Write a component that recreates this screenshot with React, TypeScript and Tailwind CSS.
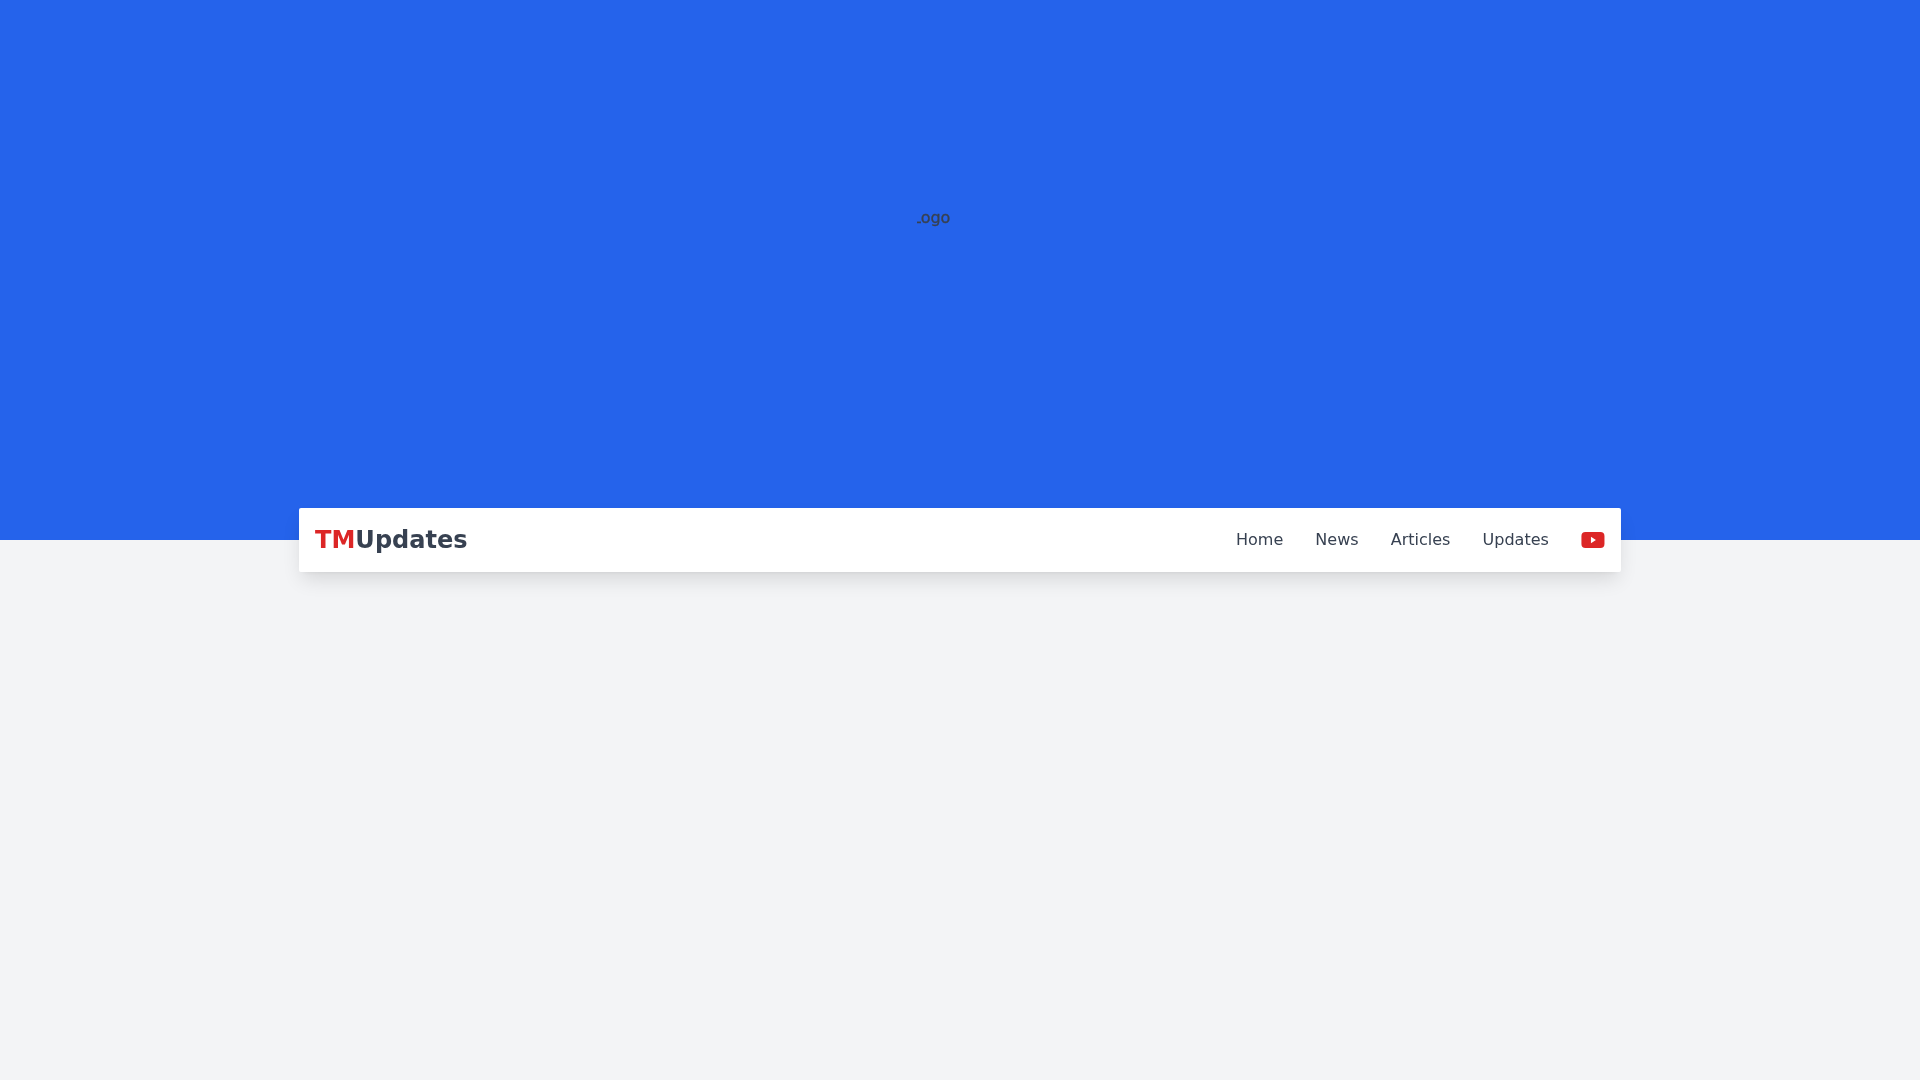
export default function App() {
  return (
    <div className="min-h-screen bg-[#f3f4f6] font-['DejaVu_Sans',sans-serif]">
      <div className="h-[540px] bg-[#2563eb] flex justify-center pt-[208px] pr-[50px]">
        <div className="h-[20px] w-[36px] overflow-hidden will-change-transform">
          <span className="block ml-[-5px] text-[16px] leading-[20px] text-[#374151] [-webkit-text-stroke:0.3px_#374151]">Logo</span>
        </div>
      </div>
      <nav className="w-[1320px] h-[64px] mx-auto -mt-8 relative bg-white rounded-[2px] shadow-[0_10px_20px_-3px_rgba(0,0,0,0.12),0_4px_6px_-4px_rgba(0,0,0,0.1)] scale-[1.0015] will-change-transform flex items-center justify-between px-4">
        <div className="text-[24px] leading-[32px] font-bold text-[#374151]">
          <span className="text-[#dc2626]">TM</span>Updates
        </div>
        <div className="flex items-center gap-8 text-[16px] text-[#374151]">
          <a>Home</a>
          <a>News</a>
          <a>Articles</a>
          <a>Updates</a>
          <svg width="24" height="24" viewBox="0 0 24 24" className="block">
            <rect x="0.5" y="4" width="23" height="16" rx="4" fill="#dc2626" />
            <path d="M10 8.8 L15 12 L10 15.2 Z" fill="#ffffff" />
          </svg>
        </div>
      </nav>
    </div>
  );
}
